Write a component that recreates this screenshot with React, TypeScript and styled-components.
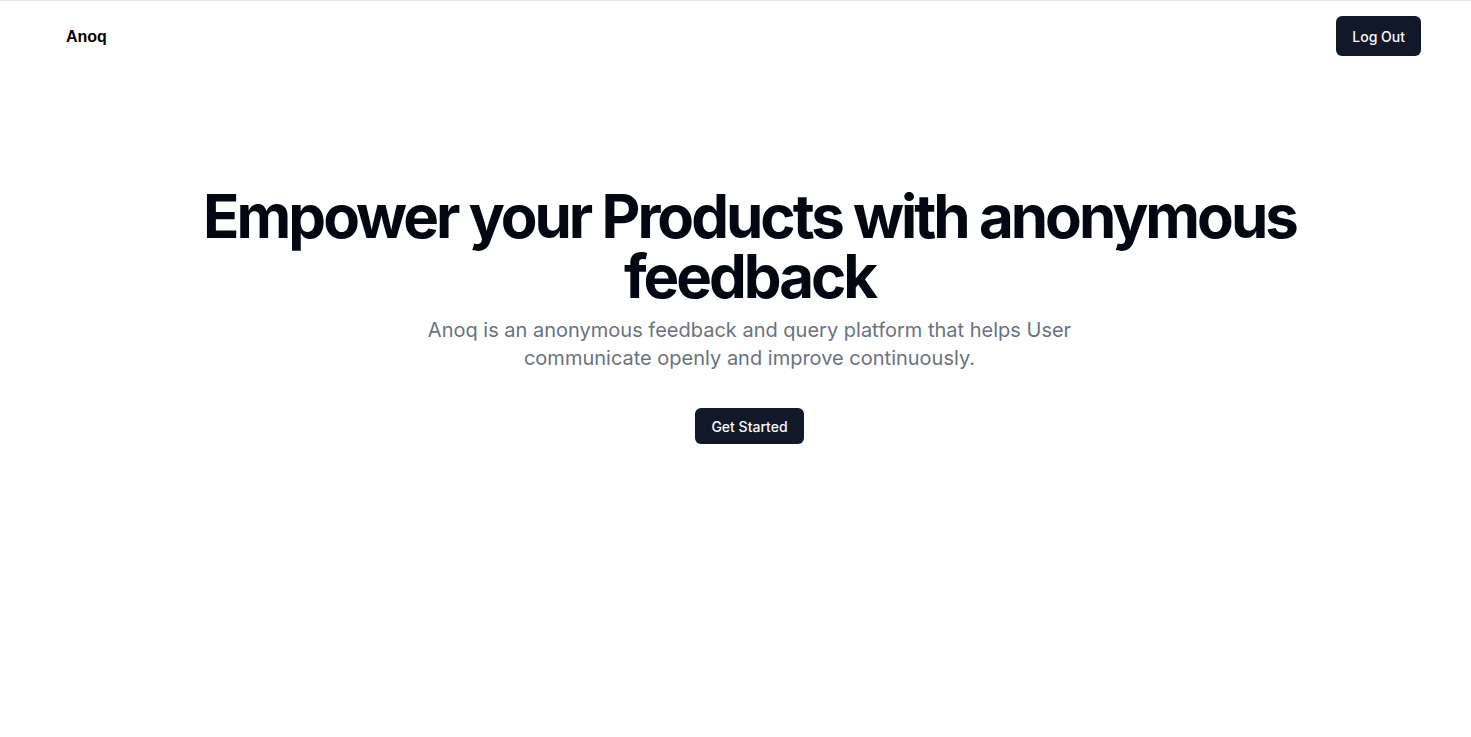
import React from "react";
import styled, { createGlobalStyle } from "styled-components";

const Global = createGlobalStyle`
  * { box-sizing: border-box; }
  html, body { margin: 0; padding: 0; background: #ffffff; }
  body { font-family: Inter, "Noto Sans", sans-serif; -webkit-font-smoothing: antialiased; }
`;

const Page = styled.div`
  min-height: 737px;
  display: flex;
  flex-direction: column;
  border-top: 1px solid #e5e7eb;
`;

const Nav = styled.nav`
  display: flex;
  align-items: center;
  justify-content: space-between;
  padding: 15px 50px 0 66px;
`;

const Logo = styled.a`
  font-family: "Liberation Sans", Arial, sans-serif;
  font-weight: 700;
  font-size: 16px;
  color: #000;
  text-decoration: none;
  padding-top: 1px;
`;

const Button = styled.button<{ $h: number }>`
  height: ${(p) => p.$h}px;
  padding: 0 16px;
  border: none;
  border-radius: 6px;
  background: #111827;
  color: #f9fafb;
  font-family: Inter, sans-serif;
  font-size: 14px;
  font-weight: 500;
  cursor: pointer;
`;

const Hero = styled.main`
  display: flex;
  flex-direction: column;
  align-items: center;
  text-align: center;
  padding: 130px 0 0 28px;
`;

const Title = styled.h1`
  margin: 0;
  font-size: 60px;
  line-height: 60px;
  font-weight: 700;
  letter-spacing: -0.05em;
  color: #030712;
  max-width: 1180px;
`;

const Subtitle = styled.p`
  margin: 10px 0 0;
  max-width: 660px;
  font-size: 20px;
  line-height: 28px;
  color: #6b7280;
`;

const Actions = styled.div`
  margin-top: 36px;
`;

export default function App() {
  return (
    <>
      <Global />
      <Page>
        <Nav>
          <Logo href="#">Anoq</Logo>
          <Button $h={40}>Log Out</Button>
        </Nav>
        <Hero>
          <Title>Empower your Products with anonymous feedback</Title>
          <Subtitle>
            Anoq is an anonymous feedback and query platform that helps User communicate openly and
            improve continuously.
          </Subtitle>
          <Actions>
            <Button $h={36}>Get Started</Button>
          </Actions>
        </Hero>
      </Page>
    </>
  );
}
